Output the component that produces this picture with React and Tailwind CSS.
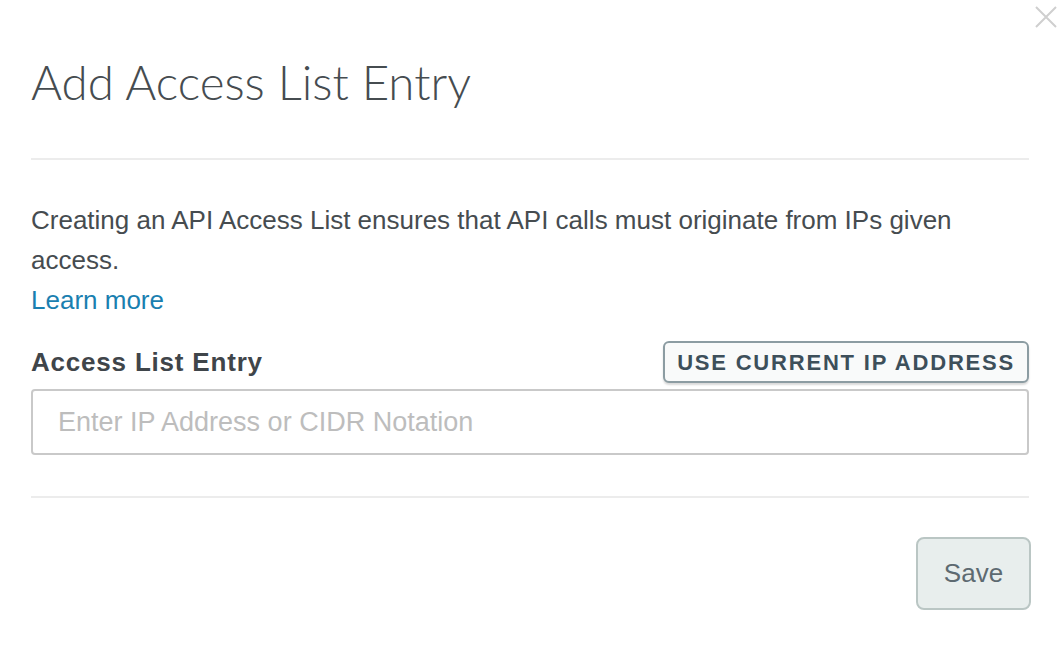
import { useState } from "react";

const App = () => {
  const [ip, setIp] = useState("");

  return (
    <div className="relative w-[1064px] h-[654px] bg-white overflow-hidden" style={{ fontFamily: '"Liberation Sans", Arial, sans-serif' }}>
      {/* Close */}
      <button className="absolute right-[6px] top-[5px] w-[24px] h-[24px] text-[#cfcfcf]">
        <svg viewBox="0 0 24 24" width="24" height="24" fill="none" stroke="currentColor" strokeWidth="2">
          <path d="M2 2 L22 22 M22 2 L2 22" />
        </svg>
      </button>

      <div className="pl-[31px] pr-[35px]">
        <h1 className="pt-[52px] pb-[46px] text-[47.5px] leading-[60px] font-light text-[#464c50]" style={{ fontFamily: 'Lato, "Liberation Sans", sans-serif' }}>
          Add Access List Entry
        </h1>
        <div className="h-[2px] bg-[#ececec]" />

        <p className="mt-[40px] text-[26px] leading-[40px] text-[#464c50]">
          Creating an API Access List ensures that API calls must originate from IPs given access.
        </p>
        <a href="#" className="block text-[26px] leading-[40px] text-[#1a7fb0]">Learn more</a>

        <div className="mt-[21px] flex items-center justify-between">
          <label className="text-[26px] font-bold tracking-[0.8px] text-[#3f454a]">Access List Entry</label>
          <button className="h-[42px] px-[12px] border-2 border-[#8c9ca2] rounded-[6px] bg-[#f9fafa] text-[22px] font-bold tracking-[1.8px] text-[#3d4f5a] shadow-[0_2px_2px_rgba(0,0,0,0.15)]">
            USE CURRENT IP ADDRESS
          </button>
        </div>

        <input
          value={ip}
          onChange={(e) => setIp(e.target.value)}
          placeholder="Enter IP Address or CIDR Notation"
          className="mt-[6px] w-full h-[66px] px-[25px] border-2 border-[#c9c9c9] rounded-[4px] text-[27px] text-[#464c50] placeholder:text-[#bdbdbd] outline-none"
        />

        <div className="mt-[41px] h-[2px] bg-[#ececec]" />

        <div className="mt-[39px] flex justify-end">
          <button className="w-[115px] h-[73px] -mr-[2px] border-2 border-[#bac6c4] rounded-[8px] bg-[#e8eeed] text-[26px] text-[#5d6a71]">
            Save
          </button>
        </div>
      </div>
    </div>
  );
};

export default App;
